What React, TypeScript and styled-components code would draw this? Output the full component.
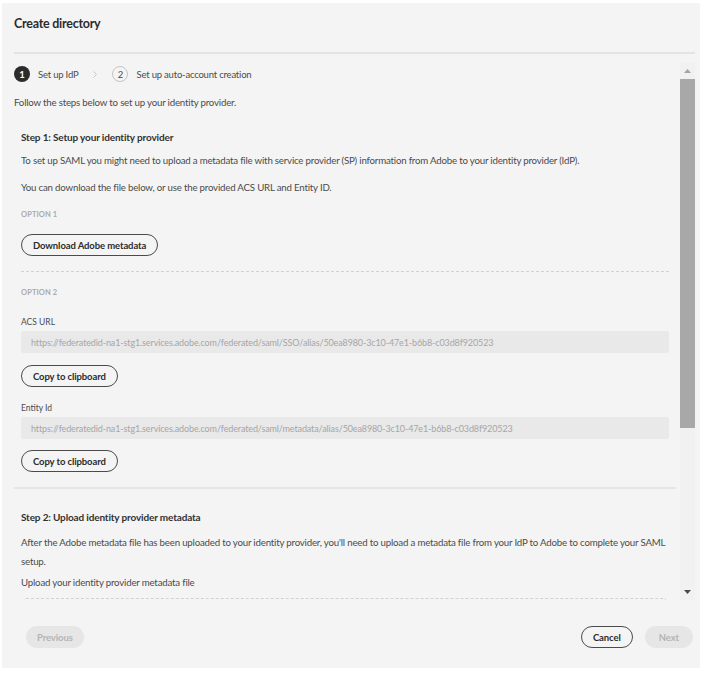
import React from "react";
import styled, { createGlobalStyle } from "styled-components";

const GlobalStyle = createGlobalStyle`
  html, body {
    margin: 0;
    background: #ffffff;
  }
  body {
    font-family: Lato, "Liberation Sans", sans-serif;
    color: #4b4b4b;
    -webkit-font-smoothing: antialiased;
  }
`;

const Page = styled.div`
  padding: 3px 2px 8px 2px;
`;

const Dialog = styled.div`
  width: 698px;
  height: 665px;
  box-sizing: border-box;
  background: #f4f4f4;
  padding: 0 5px 0 12px;
  display: flex;
  flex-direction: column;
`;

const Title = styled.h2`
  margin: 13px 0 0;
  font-size: 12.5px;
  line-height: 16px;
  font-weight: 700;
  color: #2c2c2c;
  letter-spacing: -0.25px;
`;

const Divider = styled.hr`
  margin: 20px 0 0;
  border: none;
  height: 2px;
  background: #e3e3e3;
`;

/* body + hand-drawn scrollbar side by side */
const ScrollFrame = styled.div`
  margin-top: 9px;
  height: 537px;
  display: flex;
`;

const ScrollArea = styled.div`
  flex: 1;
  min-width: 0;
  overflow-y: auto;
  overflow-x: hidden;
  scrollbar-width: none;
`;

const ScrollBar = styled.div`
  width: 15px;
  flex: none;
  display: flex;
  flex-direction: column;
  background: #f1f1f1;
`;

const ScrollButton = styled.div`
  height: 16px;
  flex: none;
  display: flex;
  align-items: center;
  justify-content: center;
`;

const Thumb = styled.div<{ $size: number }>`
  height: ${(p) => p.$size}px;
  background: #a8a8a8;
`;

const Steps = styled.div`
  height: 22px;
  display: flex;
  align-items: center;
  font-size: 9.5px;
  letter-spacing: -0.2px;
  color: #4b4b4b;
`;

const StepBadge = styled.span<{ $active?: boolean }>`
  width: 16px;
  height: 16px;
  box-sizing: border-box;
  border-radius: 50%;
  display: inline-flex;
  align-items: center;
  justify-content: center;
  font-size: 9.5px;
  letter-spacing: 0;
  font-weight: ${(p) => (p.$active ? 700 : 400)};
  background: ${(p) => (p.$active ? "#2c2c2c" : "transparent")};
  color: ${(p) => (p.$active ? "#ffffff" : "#4b4b4b")};
  border: ${(p) => (p.$active ? "none" : "1px solid #c4c4c4")};
`;

const StepLabel = styled.span`
  margin-left: 8px;
`;

const Chevron = styled.svg`
  margin: 0 15px;
`;

const Intro = styled.p`
  margin: 8px 0 0;
  font-size: 9.7px;
  line-height: 19px;
  letter-spacing: -0.2px;
`;

const Section = styled.section<{ $bordered?: boolean }>`
  margin-right: 4px;
  padding: ${(p) => (p.$bordered ? "16px 7px 15px" : "19px 7px 40px")};
  border-bottom: ${(p) => (p.$bordered ? "2px solid #e6e6e6" : "none")};
  display: flex;
  flex-direction: column;
  align-items: flex-start;
`;

const Heading = styled.h3`
  margin: 0;
  font-size: 10px;
  line-height: 19px;
  font-weight: 700;
  color: #323232;
  letter-spacing: -0.15px;
`;

const Text = styled.p<{ $gap: number }>`
  margin: ${(p) => p.$gap}px 0 0;
  font-size: 9.7px;
  line-height: 19px;
  letter-spacing: -0.2px;
`;

const OptionLabel = styled.div<{ $gap: number }>`
  margin-top: ${(p) => p.$gap}px;
  font-size: 7.5px;
  line-height: 10px;
  font-weight: 700;
  text-transform: uppercase;
  color: #ababab;
  letter-spacing: 0.1px;
`;

const FieldLabel = styled.div<{ $gap: number }>`
  margin-top: ${(p) => p.$gap}px;
  font-size: 8.5px;
  line-height: 12px;
  color: #4b4b4b;
`;

const Field = styled.div`
  margin-top: 3px;
  align-self: stretch;
  height: 22px;
  box-sizing: border-box;
  padding: 0 10px;
  border-radius: 2px;
  background: #e9e9e9;
  display: flex;
  align-items: center;
  font-size: 9px;
  color: #a6a6a6;
  letter-spacing: -0.12px;
  white-space: nowrap;
  overflow: hidden;
`;

const PillButton = styled.button<{ $gap?: number; $disabled?: boolean; $wide?: boolean }>`
  margin-top: ${(p) => p.$gap ?? 0}px;
  height: 22px;
  box-sizing: border-box;
  padding: 0 ${(p) => (p.$wide ? 14 : 11)}px;
  border-radius: 11px;
  font-family: inherit;
  font-size: 9.5px;
  font-weight: 700;
  letter-spacing: -0.1px;
  cursor: pointer;
  border: ${(p) => (p.$disabled ? "none" : "1.5px solid #4b4b4b")};
  background: ${(p) => (p.$disabled ? "#e6e6e6" : "transparent")};
  color: ${(p) => (p.$disabled ? "#b4b4b4" : "#2c2c2c")};
`;

const DashedRule = styled.div`
  margin-top: 15px;
  align-self: stretch;
  border-top: 1px dashed #d2d2d2;
`;

const DropZone = styled.div`
  margin: 6px 3px 0;
  align-self: stretch;
  height: 150px;
  border: 1px dashed #d2d2d2;
  border-radius: 2px;
`;

const Footer = styled.div`
  margin-top: 26px;
  padding: 0 2px 0 12px;
  display: flex;
  align-items: center;
  gap: 12px;
`;

const Spacer = styled.div`
  flex: 1;
`;

export default function App() {
  return (
    <>
      <GlobalStyle />
      <Page>
        <Dialog>
          <Title>Create directory</Title>
          <Divider />

          <ScrollFrame>
            <ScrollArea>
              <Steps>
                <StepBadge $active>1</StepBadge>
                <StepLabel>Set up IdP</StepLabel>
                <Chevron width="4" height="7" viewBox="0 0 4 7">
                  <polyline points="0.5,0.5 3.5,3.5 0.5,6.5" fill="none" stroke="#c6c6c6" strokeWidth="1" />
                </Chevron>
                <StepBadge>2</StepBadge>
                <StepLabel>Set up auto-account creation</StepLabel>
              </Steps>
              <Intro>Follow the steps below to set up your identity provider.</Intro>

              <Section $bordered>
                <Heading>Step 1: Setup your identity provider</Heading>
                <Text $gap={4}>
                  To set up SAML you might need to upload a metadata file with service provider (SP) information from
                  Adobe to your identity provider (IdP).
                </Text>
                <Text $gap={8}>You can download the file below, or use the provided ACS URL and Entity ID.</Text>

                <OptionLabel $gap={13}>Option 1</OptionLabel>
                <PillButton $gap={14}>Download Adobe metadata</PillButton>
                <DashedRule />

                <OptionLabel $gap={16}>Option 2</OptionLabel>
                <FieldLabel $gap={18}>ACS URL</FieldLabel>
                <Field>
                  https://federatedid-na1-stg1.services.adobe.com/federated/saml/SSO/alias/50ea8980-3c10-47e1-b6b8-c03d8f920523
                </Field>
                <PillButton $gap={12}>Copy to clipboard</PillButton>

                <FieldLabel $gap={15}>Entity Id</FieldLabel>
                <Field>
                  https://federatedid-na1-stg1.services.adobe.com/federated/saml/metadata/alias/50ea8980-3c10-47e1-b6b8-c03d8f920523
                </Field>
                <PillButton $gap={11}>Copy to clipboard</PillButton>
              </Section>

              <Section>
                <Heading>Step 2: Upload identity provider metadata</Heading>
                <Text $gap={6}>
                  After the Adobe metadata file has been uploaded to your identity provider, you'll need to upload a
                  metadata file from your IdP to Adobe to complete your SAML setup.
                </Text>
                <Text $gap={2}>Upload your identity provider metadata file</Text>
                <DropZone />
              </Section>
            </ScrollArea>

            <ScrollBar>
              <ScrollButton>
                <svg width="7" height="4" viewBox="0 0 7 4">
                  <polygon points="0,4 3.5,0 7,4" fill="#a3a3a3" />
                </svg>
              </ScrollButton>
              <Thumb $size={349} />
              <Spacer />
              <ScrollButton>
                <svg width="7" height="4" viewBox="0 0 7 4">
                  <polygon points="0,0 7,0 3.5,4" fill="#4b4b4b" />
                </svg>
              </ScrollButton>
            </ScrollBar>
          </ScrollFrame>

          <Footer>
            <PillButton $disabled>Previous</PillButton>
            <Spacer />
            <PillButton>Cancel</PillButton>
            <PillButton $disabled $wide>
              Next
            </PillButton>
          </Footer>
        </Dialog>
      </Page>
    </>
  );
}
